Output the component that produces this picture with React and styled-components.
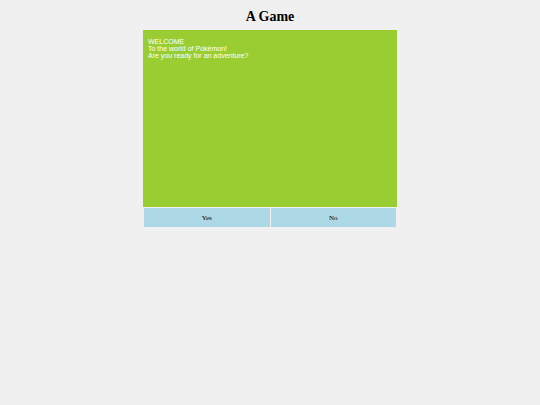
import React from 'react';
import styled, { createGlobalStyle } from 'styled-components';

const lines = ["WELCOME", "To the world of Pokémon!", "Are you ready for an adventure?"];
const answers = ["Yes", "No"];

function App() {
    return (
        <>
            <GlobalStyle />
            <GameWrapper>
                <Title>A Game</Title>
                <Screen>
                    {lines.map(line => <Line key={line}>{line}</Line>)}
                </Screen>
                <Answers>
                    {answers.map(answer => (
                        <AnswerButton key={answer} type="button">{answer}</AnswerButton>
                    ))}
                </Answers>
            </GameWrapper>
        </>
    )
}

export default App;

const GlobalStyle = createGlobalStyle`
    body{
        margin: 0;
        background: #f0f0f0;
        font-family: "Liberation Serif", serif;
    }
`

const GameWrapper = styled.main`
    max-width: 254px;
    margin: 0 auto;
    padding-top: 9px;
`

const Title = styled.h1`
    margin: 0 0 6px;
    color: black;
    font-size: 14px;
    line-height: 15px;
    text-align: center;
`

const Screen = styled.section`
    box-sizing: border-box;
    min-height: 177px;
    padding: 8px 5px;
    background: yellowgreen;
    color: white;
    font-family: "Liberation Sans", sans-serif;
`

const Line = styled.p`
    margin: 0;
    font-size: 7px;
    line-height: 7px;
`

const Answers = styled.div`
    display: flex;
    gap: 1px;
    padding: 1px;
`

const AnswerButton = styled.button`
    flex: 1;
    height: 19px;
    padding: 0;
    border: none;
    background: lightblue;
    color: black;
    font-family: inherit;
    font-size: 7px;
    cursor: pointer;
`
